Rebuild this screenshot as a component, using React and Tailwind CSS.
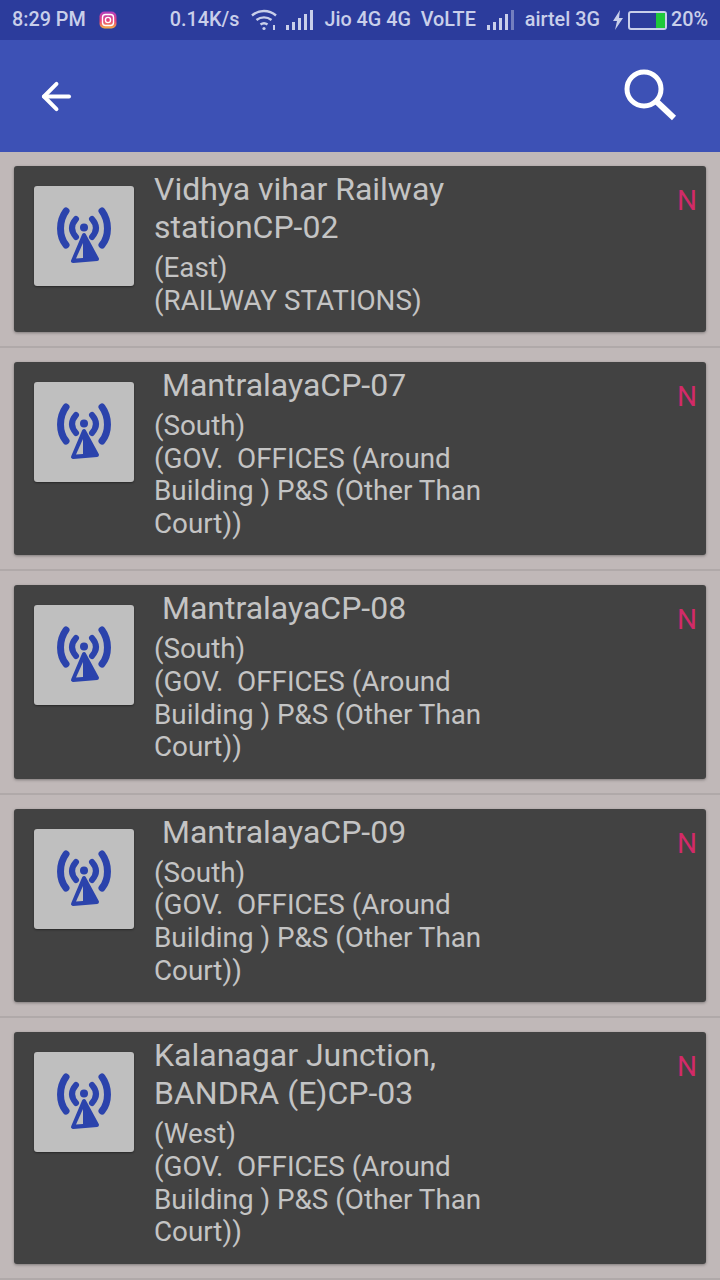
import React from 'react'
import { ArrowLeft } from 'lucide-react'

const rows = [
  { title: ['Vidhya vihar Railway', 'stationCP-02'], area: '(East)', type: ['(RAILWAY STATIONS)'] },
  { title: ['\u00a0MantralayaCP-07'], area: '(South)', type: ['(GOV.\u00a0 OFFICES (Around', 'Building ) P&S (Other Than', 'Court))'] },
  { title: ['\u00a0MantralayaCP-08'], area: '(South)', type: ['(GOV.\u00a0 OFFICES (Around', 'Building ) P&S (Other Than', 'Court))'] },
  { title: ['\u00a0MantralayaCP-09'], area: '(South)', type: ['(GOV.\u00a0 OFFICES (Around', 'Building ) P&S (Other Than', 'Court))'] },
  { title: ['Kalanagar Junction,', 'BANDRA (E)CP-03'], area: '(West)', type: ['(GOV.\u00a0 OFFICES (Around', 'Building ) P&S (Other Than', 'Court))'] },
]

const Bars = ({ dim }) => (
  <svg width="28" height="22" viewBox="0 0 28 22" fill="#c9cfea">
    <rect x="1" y="16" width="3" height="5" />
    <rect x="7" y="13" width="3" height="8" />
    <rect x="13" y="9" width="3" height="12" />
    <rect x="19" y="5" width="3" height="16" />
    <rect x="25" y="1" width="3" height="20" opacity={dim ? 0.45 : 1} />
  </svg>
)

const Wifi = () => (
  <svg width="28" height="24" viewBox="0 0 28 24" fill="none" stroke="#c9cfea" strokeWidth="2.4">
    <path d="M2 7.5C9 1.5 19 1.5 26 7.5" />
    <path d="M6.5 12C11 8.5 17 8.5 21.5 12" />
    <path d="M10.5 16.500C12.500 15 15.500 15 17.500 16.500" />
    <circle cx="14" cy="20.500" r="1.600" fill="#c9cfea" stroke="none" />
    <rect x="23" y="17" width="2" height="5" fill="#c9cfea" stroke="none" />
  </svg>
)

const Insta = () => (
  <svg width="18" height="18" viewBox="0 0 18 18">
    <defs>
      <linearGradient id="ig" x1="0" y1="0" x2="0" y2="1">
        <stop offset="0" stopColor="#b040c0" />
        <stop offset="0.55" stopColor="#e8407a" />
        <stop offset="1" stopColor="#f5b040" />
      </linearGradient>
    </defs>
    <rect x="0.5" y="0.5" width="17" height="17" rx="5" fill="url(#ig)" />
    <rect x="3.500" y="3.500" width="11" height="11" rx="3" fill="none" stroke="#fff" strokeWidth="1.400" />
    <circle cx="9" cy="9" r="2.600" fill="none" stroke="#fff" strokeWidth="1.400" />
  </svg>
)

const StatusBar = () => (
  <div className="h-10 bg-[#2c3c9c] flex items-center text-[19.8px] font-medium text-[#c9cfea] whitespace-nowrap">
    <span className="ml-3">8:29 PM</span>
    <span className="ml-[13px]"><Insta /></span>
    <span className="ml-[53px]">0.14K/s</span>
    <span className="ml-[11px]"><Wifi /></span>
    <span className="ml-[7px]"><Bars /></span>
    <span className="ml-[11px]">Jio 4G 4G&nbsp; VoLTE</span>
    <span className="ml-[10px]"><Bars dim /></span>
    <span className="ml-[11px]">airtel 3G</span>
    <svg className="ml-[12px]" width="12" height="20" viewBox="0 0 12 20" fill="#c9cfea">
      <path d="M8 0 1 11h4l-2 9 8-12H7z" />
    </svg>
    <div className="ml-[4px] w-[39px] h-[19px] border-2 border-[#c9cfea] rounded-[3px] flex justify-end">
      <div className="w-[9px] bg-[#1fc93a]" />
    </div>
    <span className="ml-[4px]">20%</span>
  </div>
)

const TowerIcon = () => (
  <svg width="58" height="60" viewBox="0 0 58 60" fill="none" stroke="#2b43ac" strokeLinecap="round" strokeLinejoin="round">
    <path d="M11 5C3.700 15 3.700 30 11 39" strokeWidth="7" />
    <path d="M47 5C54.300 15 54.300 30 47 39" strokeWidth="7" />
    <path d="M21 13C15.700 19 15.700 25 21 31" strokeWidth="6" />
    <path d="M37 13C42.300 19 42.300 25 37 31" strokeWidth="6" />
    <circle cx="29" cy="21.500" r="4" fill="#2b43ac" strokeWidth="0" />
    <path d="M29 29 18 55 42 53Z" fill="#2b43ac" strokeWidth="4" />
    <path d="M28 37 21 52.500 28 52Z" fill="#bfbfbf" strokeWidth="0" />
  </svg>
)

const Row = ({ row }) => (
  <div className="px-[14px] py-[14px] border-b-2 border-[#b0a9a9]">
    <div className="bg-[#424242] rounded-[3px] shadow-[0_1px_3px_rgba(0,0,0,0.35)] flex items-start pl-5 pr-[9px] pt-1 pb-[14.7px]">
      <div className="mt-4 w-[100px] h-[100px] shrink-0 bg-[#bfbfbf] rounded-[3px] shadow-[0_1px_2px_rgba(0,0,0,0.4)] flex items-center justify-center">
        <TowerIcon />
      </div>
      <div className="ml-5 flex-1 text-[#c4c4c4] whitespace-nowrap">
        {row.title.map((line) => (
          <div key={line} className="text-[32px] leading-[38px]">{line}</div>
        ))}
        <div className="mt-[6px] text-[27.8px] leading-[32.67px]">{row.area}</div>
        {row.type.map((line) => (
          <div key={line} className="text-[27.8px] leading-[32.67px]">{line}</div>
        ))}
      </div>
      <span className="mt-[14px] text-[28px] leading-[33px] text-[#d22a68]">N</span>
    </div>
  </div>
)

export default function App() {
  return (
    <div className="h-[1280px] w-[720px] overflow-hidden bg-[#c0b8b8] font-['Roboto',sans-serif]">
      <StatusBar />
      <header className="h-28 bg-[#3d51b5] flex items-center justify-between pl-[35px] pr-[41px]">
        <ArrowLeft size={43} color="#ffffff" strokeWidth={2.2} />
        <svg width="56" height="56" viewBox="0 0 56 56" fill="none" stroke="#ffffff">
          <circle cx="21" cy="21" r="17" strokeWidth="5" />
          <path d="M33 33 51 50" strokeWidth="6" />
        </svg>
      </header>
      {rows.map((row, i) => (
        <Row key={i} row={row} />
      ))}
    </div>
  )
}
